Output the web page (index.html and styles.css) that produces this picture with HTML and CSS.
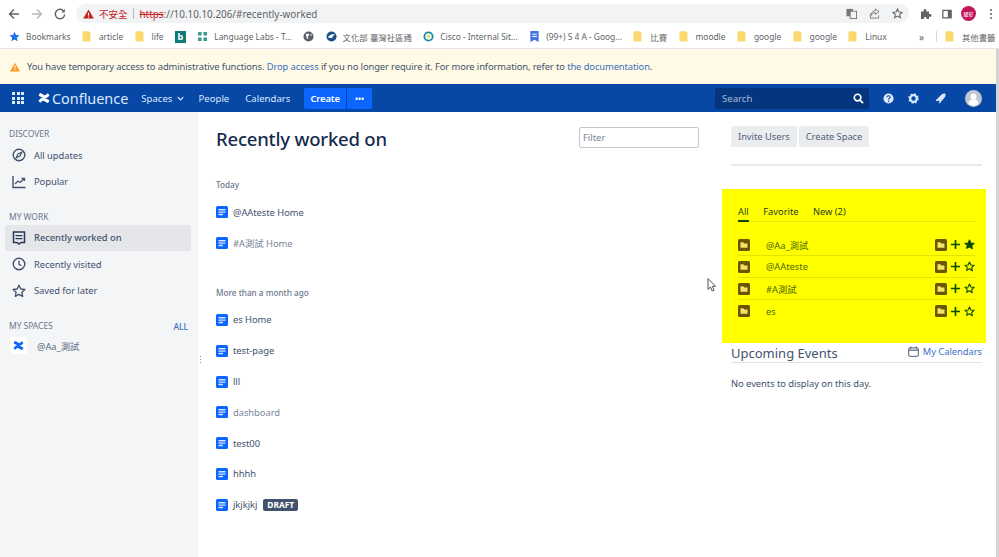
FILE: index.html
```html
<!DOCTYPE html>
<html lang="en">
<head>
<meta charset="utf-8">
<title>Recently worked on - Confluence</title>
<link rel="stylesheet" href="styles.css">
</head>
<body>
<svg class="defs" width="0" height="0" aria-hidden="true">
  <symbol id="folder" viewBox="0 0 10 12"><path d="M.5 1.2C.5.6 1 .2 1.5.2H7l2.5 2.4v8c0 .6-.4 1-1 1h-7c-.6 0-1-.4-1-1z" fill="#fbd96f"/><path d="M7 .2v2.4h2.5z" fill="#f2c94c"/></symbol>
  <symbol id="page" viewBox="0 0 12 12"><rect width="12" height="12" rx="1.5" fill="#0b66ff"/><path d="M2.5 3h7v1.4h-7zM2.5 5.4h7v1.4h-7zM2.5 7.8h4.5v1.4H2.5z" fill="#d6e4ff"/></symbol>
  <symbol id="logo" viewBox="0 0 14 12"><path d="M.6 9.2c2-3.600 4.600-4.200 7-3.200l5.400 2.400c.4.200.5.600.3 1l-1.200 2.200c-.2.300-.5.400-.8.300L7 9.700c-1.400-.6-2.600-.2-3.500 1.400-.2.300-.6.400-.9.300L.9 10.300C.5 10 .4 9.600.6 9.200zM13.400 2.800c-2 3.600-4.600 4.200-7 3.200L1 3.600c-.4-.2-.5-.6-.3-1L1.900.4c.2-.3.500-.4.800-.3L7 2.300c1.400.6 2.600.2 3.500-1.400.2-.3.600-.4.900-.3l1.700 1.100c.4.300.5.700.3 1.100z"/></symbol>
  <symbol id="yfolder" viewBox="0 0 12 12"><rect width="12" height="12" rx="1.500" fill="#6b5600"/><path d="M2.500 3.300h2.700l1 1.100h3.300v4.300h-7z" fill="#f4e36a"/></symbol>
  <symbol id="plus" viewBox="0 0 12 12"><path d="M5.100 1h1.800v4.100H11v1.800H6.900V11H5.100V6.900H1V5.100h4.100z" fill="#0b4d00"/></symbol>
  <symbol id="star" viewBox="0 0 12 12"><path d="M6 1.200l1.500 3.200 3.500.4-2.600 2.300.7 3.500L6 8.400l-3.100 1.800.7-3.500L1 4.800l3.500-.4z" fill="none" stroke="#0b4d00" stroke-width="1.200" stroke-linejoin="round"/></symbol>
  <symbol id="starfill" viewBox="0 0 12 12"><path d="M6 1.200l1.500 3.200 3.500.4-2.600 2.300.7 3.500L6 8.400l-3.100 1.800.7-3.500L1 4.800l3.500-.4z" fill="#0b4d00" stroke="#0b4d00" stroke-width="1.200" stroke-linejoin="round"/></symbol>
</svg>

<header class="chrome">
  <div class="toolbar">
    <svg class="tool" viewBox="0 0 12 12"><path d="M11 6H2M6 1.500L1.500 6 6 10.500" fill="none" stroke="#5f6368" stroke-width="1.400"/></svg>
    <svg class="tool" viewBox="0 0 12 12"><path d="M1 6h9M6 1.500L10.500 6 6 10.500" fill="none" stroke="#b4b7bb" stroke-width="1.400"/></svg>
    <svg class="tool" viewBox="0 0 12 12"><path d="M10 3.500A4.700 4.700 0 1 0 10.700 6.500" fill="none" stroke="#5f6368" stroke-width="1.400"/><path d="M10.800 1v3.500H7.300z" fill="#5f6368"/></svg>
    <div class="omnibox">
      <svg class="warn" viewBox="0 0 12 11"><path d="M6 .5L11.800 10.500H.2z" fill="#c5221f"/><path d="M5.400 4h1.200v3.500H5.400zM5.400 8.200h1.200v1.200H5.400z" fill="#fff"/></svg>
      <span class="insecure">不安全</span>
      <span class="omni-sep"></span>
      <span class="url"><s class="scheme">https</s>://10.10.10.206/#recently-worked</span>
      <span class="omni-right">
        <svg class="omni-ico" viewBox="0 0 12 12"><rect x=".5" y="1" width="7" height="8" fill="#777"/><rect x="4.500" y="3.500" width="7" height="8" fill="#f1f3f4" stroke="#777"/></svg>
        <svg class="omni-ico" viewBox="0 0 12 12"><path d="M1.500 6v5h9V8M7 1l4 3-4 3V5.200C4.500 5.200 3.300 6.400 2.500 8c0-3 1.500-4.800 4.500-5z" fill="none" stroke="#777"/></svg>
        <svg class="omni-ico" viewBox="0 0 12 12"><path d="M6 1l1.500 3.300 3.600.4-2.700 2.400.8 3.600L6 8.900l-3.200 1.800.8-3.600L.9 4.700l3.600-.4z" fill="none" stroke="#5f6368" stroke-width="1.100"/></svg>
      </span>
    </div>
    <svg class="tool ext" viewBox="0 0 12 12"><path d="M1 3.500h2.700C3.400 1.800 4 1 5 1s1.600.8 1.300 2.500H9v2.600c1.700-.3 2.500.3 2.500 1.300S10.700 9 9 8.700V11H6.500C6.800 9.700 6.200 9 5.200 9S3.600 9.700 3.900 11H1z" fill="#5f6368"/></svg>
    <svg class="tool side" viewBox="0 0 12 12"><path d="M1 1.500h10v9H1z" fill="none" stroke="#5f6368" stroke-width="1.500"/><path d="M7 1.500h4v9H7z" fill="#5f6368"/></svg>
    <span class="avatar-chip">耀彰</span>
    <span class="kebab"><i></i><i></i><i></i></span>
  </div>
  <nav class="bookmarks">
    <a class="bm"><svg class="bm-ico" viewBox="0 0 12 12"><path d="M6 .8l1.600 3.500 3.800.4-2.800 2.600.8 3.800L6 9.200l-3.400 1.900.8-3.800L.6 4.700l3.800-.4z" fill="#1a73e8"/></svg>Bookmarks</a>
    <a class="bm fold"><svg class="bm-fold"><use href="#folder"/></svg>article</a>
    <a class="bm fold"><svg class="bm-fold"><use href="#folder"/></svg>life</a>
    <a class="bm"><span class="bing">b</span></a>
    <a class="bm"><svg class="bm-ico" viewBox="0 0 12 12"><path d="M1 1h4v4H1zM7 1h4v4H7zM1 7h4v4H1zM7 7h4v4H7z" fill="#3f9a8f"/></svg>Language Labs - T...</a>
    <a class="bm"><svg class="bm-ico" viewBox="0 0 12 12"><circle cx="6" cy="6" r="5.500" fill="#5a5f66"/><path d="M3 3h3l1 2-2 1 1 3-2-1zM8 2.500l2 2-1.500.8z" fill="#fff"/></svg></a>
    <a class="bm"><svg class="bm-ico" viewBox="0 0 12 12"><circle cx="6" cy="6" r="5.500" fill="#1d4e89"/><path d="M2 7c2-3 5-4 8-3-2 .5-3 2-3.500 4z" fill="#fff"/></svg>文化部 臺灣社區通</a>
    <a class="bm"><svg class="bm-ico" viewBox="0 0 12 12"><circle cx="6" cy="6" r="4.500" fill="none" stroke="#1a8a9a" stroke-width="2"/><circle cx="6" cy="6" r="2" fill="#d7e26a"/></svg>Cisco - Internal Sit...</a>
    <a class="bm"><svg class="bm-ico" viewBox="0 0 12 12"><path d="M1.500 0h9v12l-4.500-2.500L1.500 12z" fill="#3f74e0"/><path d="M3.500 3h5v1h-5zM3.500 5.500h5v1h-5z" fill="#fff"/></svg>(99+) S 4 A - Goog...</a>
    <a class="bm fold"><svg class="bm-fold"><use href="#folder"/></svg>比賽</a>
    <a class="bm fold"><svg class="bm-fold"><use href="#folder"/></svg>moodle</a>
    <a class="bm fold"><svg class="bm-fold"><use href="#folder"/></svg>google</a>
    <a class="bm fold"><svg class="bm-fold"><use href="#folder"/></svg>google</a>
    <a class="bm fold"><svg class="bm-fold"><use href="#folder"/></svg>Linux</a>
    <span class="more">»</span>
    <span class="bm-sep"></span>
    <a class="bm fold"><svg class="bm-fold"><use href="#folder"/></svg>其他書籤</a>
  </nav>
</header>

<div class="viewport">
  <div class="page">
    <div class="banner">
      <svg class="banner-ico" viewBox="0 0 12 11"><path d="M6 .4l5.700 9.800c.2.400 0 .8-.5.800H.8c-.5 0-.7-.4-.5-.8z" fill="#ff991f"/><path d="M5.400 3.500h1.200v3.800H5.400zM5.400 8h1.200v1.200H5.400z" fill="#fff"/></svg>
      <span>You have temporary access to administrative functions. <a class="link">Drop access</a> if you no longer require it. For more information, refer to <a class="link">the documentation</a>.</span>
    </div>
    <div class="nav">
      <span class="apps"><i></i><i></i><i></i><i></i><i></i><i></i><i></i><i></i><i></i></span>
      <span class="brand"><svg class="brand-ico"><use href="#logo"/></svg>Confluence</span>
      <a class="nav-link spaces">Spaces<svg class="chev" viewBox="0 0 10 6"><path d="M1 1l4 4 4-4" fill="none" stroke="#deebff" stroke-width="1.800"/></svg></a>
      <a class="nav-link">People</a>
      <a class="nav-link">Calendars</a>
      <span class="create-group"><button class="create">Create</button><button class="create dots">•••</button></span>
      <div class="nav-right">
        <div class="search"><span>Search</span>
          <svg class="search-ico" viewBox="0 0 12 12"><circle cx="5" cy="5" r="3.600" fill="none" stroke="#fff" stroke-width="1.800"/><path d="M7.700 7.700L11 11" stroke="#fff" stroke-width="2"/></svg>
        </div>
        <svg class="nav-ico" viewBox="0 0 12 12"><circle cx="6" cy="6" r="5.500" fill="#deebff"/><path d="M4.200 4.600C4.300 3.500 5 3 6 3s1.800.6 1.800 1.500c0 1.300-1.600 1.200-1.600 2.600" fill="none" stroke="#0747a6" stroke-width="1.200"/><circle cx="6.200" cy="9" r=".8" fill="#0747a6"/></svg>
        <svg class="nav-ico" viewBox="0 0 12 12"><circle cx="6" cy="6" r="3.600" fill="none" stroke="#deebff" stroke-width="2.400"/><circle cx="6" cy="6" r="5" fill="none" stroke="#deebff" stroke-width="1.400" stroke-dasharray="2 1.930"/></svg>
        <svg class="nav-ico rocket" viewBox="0 0 12 12"><path d="M.8 7.800L7.500 1.300c1.500-.9 3-.9 3.700-.5.400.8.400 2.200-.5 3.700L5.500 10.500 4.300 8.200 2 9z" fill="#deebff"/><path d="M3.500 10l1.500 1.500L6.500 10z" fill="#deebff"/></svg>
        <span class="user"><svg viewBox="0 0 16 16" class="user-svg"><circle cx="8" cy="8" r="8" fill="#c1c7d0"/><circle cx="8" cy="6" r="2.800" fill="#fff"/><path d="M3.200 13c0-3 2-4.200 4.800-4.200S12.800 10 12.800 13A7.500 7.500 0 0 1 3.200 13z" fill="#fff"/></svg></span>
      </div>
    </div>

    <div class="layout">
      <aside class="sidebar">
        <h4 class="side-head">DISCOVER</h4>
        <a class="side-item"><svg class="side-ico" viewBox="0 0 14 14"><circle cx="7" cy="7" r="5.800" fill="none" stroke="#42526e" stroke-width="1.400"/><path d="M9.800 4.200L8 8 4.200 9.800 6 6z" fill="none" stroke="#42526e" stroke-width="1.200"/></svg>All updates</a>
        <a class="side-item"><svg class="side-ico" viewBox="0 0 14 14"><path d="M1 1v11.500h12.500" fill="none" stroke="#42526e" stroke-width="1.400"/><path d="M3 9l3-3 2 1.500 4-3.500M9.500 3.500H12.500V6" fill="none" stroke="#42526e" stroke-width="1.300"/></svg>Popular</a>
        <h4 class="side-head second">MY WORK</h4>
        <a class="side-item active"><svg class="side-ico" viewBox="0 0 14 14"><path d="M1.500 1h11v10.500H9L7 13l-2-1.500H1.500z" fill="none" stroke="#253858" stroke-width="1.500"/><path d="M3.500 4h7v1.300h-7zM3.500 7h7v1.300h-7z" fill="#253858"/></svg>Recently worked on</a>
        <a class="side-item"><svg class="side-ico" viewBox="0 0 14 14"><circle cx="7" cy="7" r="5.800" fill="none" stroke="#42526e" stroke-width="1.400"/><path d="M7 3.500V7.300l2.500 1.500" fill="none" stroke="#42526e" stroke-width="1.300"/></svg>Recently visited</a>
        <a class="side-item"><svg class="side-ico" viewBox="0 0 14 14"><path d="M7 1.200l1.800 3.800 4.100.5-3 2.800.8 4.100L7 10.400l-3.700 2 .8-4.100-3-2.800 4.100-.5z" fill="none" stroke="#42526e" stroke-width="1.300" stroke-linejoin="round"/></svg>Saved for later</a>
        <div class="side-row"><h4 class="side-head third">MY SPACES</h4><a class="side-all">ALL</a></div>
        <a class="space"><span class="space-logo"><svg class="space-ico"><use href="#logo"/></svg></span>@Aa_測試</a>
      </aside>
      <span class="grip"><i></i><i></i><i></i></span>

      <main class="content">
        <section class="left">
          <div class="title-row">
            <h1>Recently worked on</h1>
            <input class="filter" placeholder="Filter">
          </div>
          <h5 class="group">Today</h5>
          <ul class="list">
            <li><svg class="page-ico"><use href="#page"/></svg>@AAteste Home</li>
            <li class="visited"><svg class="page-ico"><use href="#page"/></svg>#A測試 Home</li>
          </ul>
          <h5 class="group later">More than a month ago</h5>
          <ul class="list">
            <li><svg class="page-ico"><use href="#page"/></svg>es Home</li>
            <li><svg class="page-ico"><use href="#page"/></svg>test-page</li>
            <li><svg class="page-ico"><use href="#page"/></svg>lll</li>
            <li class="visited"><svg class="page-ico"><use href="#page"/></svg>dashboard</li>
            <li><svg class="page-ico"><use href="#page"/></svg>test00</li>
            <li><svg class="page-ico"><use href="#page"/></svg>hhhh</li>
            <li><svg class="page-ico"><use href="#page"/></svg>jkjkjkj<span class="draft">DRAFT</span></li>
          </ul>
        </section>

        <section class="right">
          <div class="actions">
            <button class="btn">Invite Users</button>
            <button class="btn">Create Space</button>
          </div>
          <hr class="rule">
          <div class="spaces-panel">
            <div class="tabs"><a class="tab current">All</a><a class="tab">Favorite</a><a class="tab">New (2)</a></div>
            <ul class="space-list">
              <li><svg class="y-ico"><use href="#yfolder"/></svg><span class="y-name">@Aa_測試</span><svg class="y-ico"><use href="#yfolder"/></svg><svg class="y-act"><use href="#plus"/></svg><svg class="y-act"><use href="#starfill"/></svg></li>
              <li><svg class="y-ico"><use href="#yfolder"/></svg><span class="y-name">@AAteste</span><svg class="y-ico"><use href="#yfolder"/></svg><svg class="y-act"><use href="#plus"/></svg><svg class="y-act"><use href="#star"/></svg></li>
              <li><svg class="y-ico"><use href="#yfolder"/></svg><span class="y-name">#A測試</span><svg class="y-ico"><use href="#yfolder"/></svg><svg class="y-act"><use href="#plus"/></svg><svg class="y-act"><use href="#star"/></svg></li>
              <li><svg class="y-ico"><use href="#yfolder"/></svg><span class="y-name">es</span><svg class="y-ico"><use href="#yfolder"/></svg><svg class="y-act"><use href="#plus"/></svg><svg class="y-act"><use href="#star"/></svg></li>
            </ul>
          </div>
          <div class="events-head">
            <h3>Upcoming Events</h3>
            <a class="cal-link"><svg class="cal-ico" viewBox="0 0 12 12"><rect x=".7" y="2" width="10.600" height="9.300" rx="1.500" fill="none" stroke="#42526e"/><path d="M.7 4.500h10.600" stroke="#42526e" stroke-width="1.200"/><path d="M3 .5v2.500M9 .5v2.500" stroke="#42526e"/></svg>My Calendars</a>
          </div>
          <p class="no-events">No events to display on this day.</p>
        </section>
      </main>
    </div>
  </div>
  <div class="scrollbar"></div>
</div>
<svg class="cursor" viewBox="0 0 10 15"><path d="M.7.7v11.500l2.700-2.500 1.800 4.300 2-.9-1.800-4.200h3.500z" fill="#fff" stroke="#444" stroke-width="1"/></svg>
</body>
</html>
```
FILE: styles.css
```css
* { box-sizing: border-box; }
html, body { margin: 0; height: 100%; overflow: hidden; }
body { font-family: "Noto Sans", "Noto Sans CJK TC", sans-serif; color: #172b4d; background: #fff; display: flex; flex-direction: column; position: relative; }
.defs { position: absolute; }
h1, h3, h4, h5, p, ul { margin: 0; padding: 0; }
ul { list-style: none; }
button { font-family: inherit; border: 0; }

/* browser chrome */
.chrome { flex: none; height: 49px; background: #fff; border-bottom: 1px solid #e4e5e7; }
.toolbar { height: 27px; display: flex; align-items: center; padding: 0 0 0 8px; }
.tool { width: 12px; height: 12px; margin-right: 11px; flex: none; }
.omnibox { width: 833px; height: 19px; margin-left: -1px; background: #f1f3f4; border-radius: 10px; display: flex; align-items: center; padding: 0 6px 0 7px; font-size: 10px; }
.warn { width: 11px; height: 10px; margin-right: 5px; }
.insecure { color: #c5221f; font-size: 9.500px; }
.omni-sep { width: 1px; height: 11px; background: #b8bbbf; margin: 0 6px 0 5px; }
.url { color: #5f6368; font-size: 9.900px; }
.scheme { color: #c5221f; }
.omni-right { margin-left: auto; display: flex; gap: 12px; }
.omni-ico { width: 11px; height: 11px; }
.ext { margin-left: 11px; margin-right: 10px; }
.side { width: 10px; margin-right: 9px; }
.avatar-chip { width: 15px; height: 15px; border-radius: 50%; background: #c2185b; color: #fff; font-size: 5px; display: flex; align-items: center; justify-content: center; flex: none; }
.kebab { display: flex; flex-direction: column; gap: 2px; margin-left: 14px; }
.kebab i { width: 2px; height: 2px; border-radius: 50%; background: #5f6368; }
.bookmarks { height: 19px; display: flex; align-items: center; padding-left: 9px; gap: 11.400px; font-size: 8.400px; color: #5f6368; white-space: nowrap; }
.bm { display: flex; align-items: center; gap: 6px; flex: none; }
.bm.fold { gap: 8px; }
.bm-ico { width: 11px; height: 11px; flex: none; }
.bm-fold { width: 9px; height: 11px; flex: none; }
.bing { display: block; width: 11px; height: 12px; background: #0f7a78; color: #fff; font-size: 9px; font-weight: 700; line-height: 12px; text-align: center; }
.more { margin-left: 21px; font-size: 10px; }
.bm-sep { width: 1px; height: 11px; background: #d5d7da; margin: 0 -3px 0 0; }

/* page */
.viewport { flex: 1; display: flex; min-height: 0; }
.page { flex: 1; min-width: 0; display: flex; flex-direction: column; }
.scrollbar { width: 3px; background: #d4d4d4; }
.banner { height: 35px; background: #fffae6; display: flex; align-items: center; gap: 7px; padding-left: 10px; font-size: 9.400px; letter-spacing: -.1px; color: #42526e; }
.banner-ico { width: 10px; height: 10px; }
.link { color: #3b6fc2; }

/* nav */
.nav { height: 28px; background: #0747a6; display: flex; align-items: center; color: #deebff; font-size: 9.600px; padding-left: 12px; }
.apps { display: grid; grid-template-columns: repeat(3, 3px); gap: 1.500px; width: 12px; }
.apps i { height: 3px; background: #deebff; }
.brand { display: flex; align-items: center; gap: 2px; margin-left: 14px; font-size: 14.400px; color: #deebff; fill: #fff; }
.brand-ico { width: 12px; height: 10px; }
.nav-link { display: flex; align-items: center; gap: 5px; }
.spaces { margin-left: 13px; }
.chev { width: 7px; height: 5px; }
.nav-link + .nav-link { margin-left: 16px; }
.spaces + .nav-link { margin-left: 14px; }
.create-group { display: flex; gap: 1px; margin-left: 14px; }
.create { height: 21px; background: #0b66ff; color: #fff; font-size: 9.400px; letter-spacing: -.1px; font-weight: 600; padding: 0 6px; border-radius: 2px 0 0 2px; }
.create.dots { width: 25px; padding: 0; font-size: 8px; letter-spacing: 0; border-radius: 0 2px 2px 0; }
.nav-right { margin-left: auto; display: flex; align-items: center; }
.search { width: 154px; height: 21px; background: #05357d; border-radius: 2px; display: flex; align-items: center; justify-content: space-between; padding: 0 5px 0 7px; color: #a8bbd9; font-size: 9.600px; }
.search-ico { width: 11px; height: 11px; }
.nav-ico { width: 11px; height: 11px; margin-left: 14px; }
.rocket { margin-left: 16px; }
.user { width: 17px; height: 17px; margin: 0 14px 0 19px; }
.user-svg { width: 17px; height: 17px; display: block; }

/* layout */
.layout { flex: 1; min-height: 0; display: flex; position: relative; }
.sidebar { width: 198px; flex: none; background: #f4f5f7; padding: 16px 7px 0 5px; color: #42526e; font-size: 9.400px; letter-spacing: -.05px; }
.side-head { font-size: 8.500px; font-weight: 400; color: #6b778c; padding-left: 4px; line-height: 12px; margin-bottom: 2px; }
.side-head.second { margin-top: 15.500px; margin-bottom: 2px; }
.side-row { display: flex; justify-content: space-between; align-items: center; margin-top: 16px; }
.side-head.third { margin: 0; }
.side-all { color: #3b6fc2; font-size: 8.500px; font-weight: 500; padding-right: 3px; }
.side-item { height: 26.500px; display: flex; align-items: center; gap: 8px; padding-left: 7px; border-radius: 2px; }
.side-item.active { background: #e4e6ea; font-weight: 500; color: #42526e; }
.side-ico { width: 14px; height: 14px; flex: none; }
.space { display: flex; align-items: center; gap: 10px; padding-left: 5px; margin-top: 5px; color: #5e6c84; }
.space-logo { width: 17px; height: 17px; background: #fff; display: flex; align-items: center; justify-content: center; fill: #0b66ff; border-radius: 2px; }
.space-ico { width: 11px; height: 9px; }
.grip { position: absolute; left: 200px; top: 244px; display: flex; flex-direction: column; gap: 2px; }
.grip i { width: 1px; height: 1px; background: #8993a4; }

.content { flex: 1; min-width: 0; display: flex; padding: 14px 0 0 18px; gap: 32px; }
.left { width: 483px; flex: none; }
.title-row { display: flex; justify-content: space-between; align-items: flex-start; height: 53px; }
h1 { font-size: 18.500px; letter-spacing: -.2px; font-weight: 500; line-height: 26px; color: #172b4d; }
.filter { width: 120px; height: 21px; margin-top: 1px; border: 1px solid #c1c7d0; border-radius: 2px; padding: 0 3px; font-family: inherit; font-size: 9.400px; background: #fff; }
.filter::placeholder { color: #7a869a; }
.group { font-size: 8.200px; font-weight: 500; color: #6b778c; line-height: 12px; margin-bottom: 6px; }
.group.later { margin-top: 28px; margin-bottom: 6px; }
.list li { height: 30.800px; display: flex; align-items: center; gap: 5px; font-size: 9.400px; letter-spacing: -.05px; color: #42526e; }
.list li.visited { color: #7a869a; }
.page-ico { width: 12px; height: 12px; flex: none; }
.draft { margin-left: 1px; background: #42526e; color: #fff; font-size: 8.400px; font-weight: 700; line-height: 12px; padding: 0 4px; border-radius: 2px; }

.right { width: 251px; flex: none; }
.actions { display: flex; gap: 2px; }
.btn { height: 21px; padding: 0 7px; background: #ebecf0; color: #505f79; font-size: 9.400px; letter-spacing: -.05px; border-radius: 2px; }
.rule { border: 0; height: 2px; background: #e8e9ec; margin: 17px 0 23px; }
.spaces-panel { margin: 0 -4px 0 -9px; height: 154px; background: #ffff00; padding: 16px 11px 0 16px; }
.tabs { display: flex; gap: 14.500px; border-bottom: 1px solid #e6e600; height: 17px; font-size: 9.300px; color: #2b3a1a; }
.tab { height: 17px; line-height: 14px; }
.tab.current { border-bottom: 2px solid #0b4d00; color: #1f4d00; }
.space-list { margin-top: 12px; }
.space-list li { height: 22px; display: flex; align-items: center; gap: 3px; border-bottom: 1px solid #e3e300; font-size: 9.300px; color: #4d6a00; }
.space-list li:last-child { border-bottom: 0; }
.y-ico { width: 12px; height: 12px; flex: none; }
.y-act { width: 11px; height: 11px; flex: none; }
.y-name { flex: 1; margin-left: 13px; }
.events-head { display: flex; justify-content: space-between; align-items: center; height: 20px; border-bottom: 1px solid #dfe1e6; }
h3 { font-size: 13px; font-weight: 400; color: #42526e; }
.cal-link { display: flex; align-items: center; gap: 4px; font-size: 9.300px; color: #3b6fc2; margin-top: -2px; }
.cal-ico { width: 11px; height: 11px; }
.no-events { margin-top: 14px; font-size: 9.400px; letter-spacing: -.05px; color: #42526e; }

.cursor { position: absolute; left: 707px; top: 278px; width: 10px; height: 14px; }
```
